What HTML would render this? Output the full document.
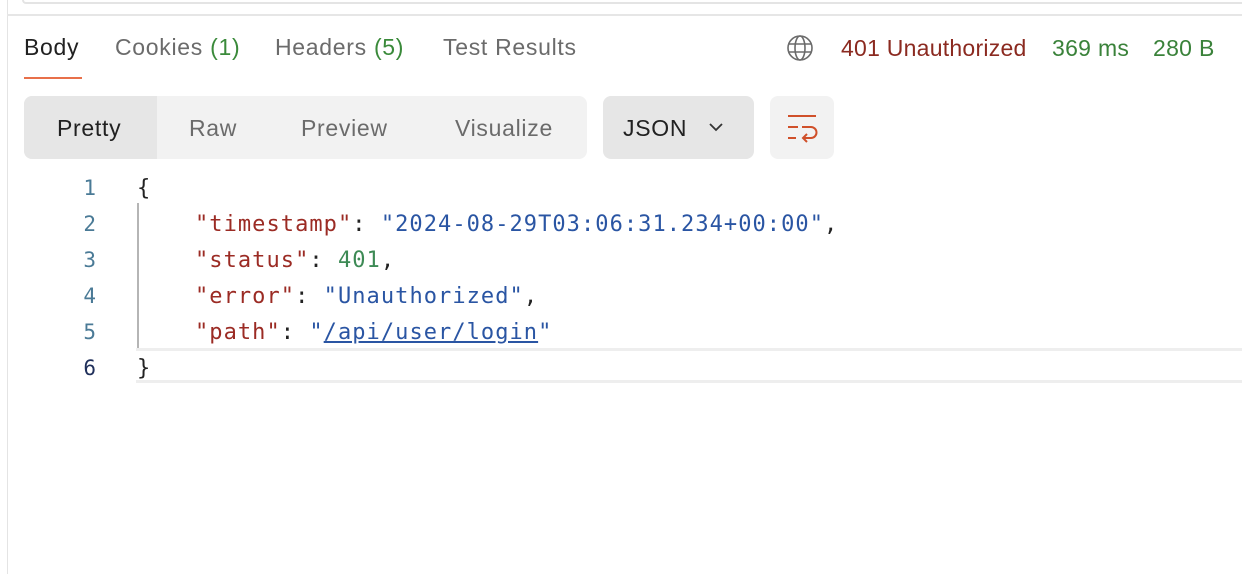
<!DOCTYPE html>
<html><head><meta charset="utf-8"><style>
*{margin:0;padding:0;box-sizing:border-box}
body{width:1242px;height:574px;background:#fff;position:relative;overflow:hidden;font-family:"Liberation Sans",sans-serif}
.a{position:absolute;white-space:nowrap}
.t{font-size:23px;letter-spacing:0.7px;top:34px;color:#6b6b6b}
.u{font-size:23px;letter-spacing:0.7px}
.mono{font-family:"DejaVu Sans Mono","Liberation Mono",monospace;font-size:22px;letter-spacing:1.05px}
.ln{position:absolute;left:40px;width:56px;text-align:right;color:#4a7a96;font-family:"DejaVu Sans Mono",monospace;font-size:21px}
.k{color:#9b2b24}.s{color:#2a55a3}.n{color:#3d8a55}.p{color:#222}
</style></head><body>
<div class="a" style="left:7px;top:0;width:1px;height:574px;background:#e4e4e4"></div>
<div class="a" style="left:22px;top:0;width:1220px;height:4px;border-bottom:2px solid #e4e4e4;border-left:2px solid #e4e4e4;border-bottom-left-radius:4px"></div>
<div class="a" style="left:7px;top:14px;width:1235px;height:2px;background:#e6e6e6"></div>

<div class="a t" style="left:24px;color:#212121">Body</div>
<div class="a" style="left:24px;top:77px;width:58px;height:2px;background:#e8704a"></div>
<div class="a t" style="left:115px">Cookies <span style="color:#3a8a3a">(1)</span></div>
<div class="a t" style="left:275px">Headers <span style="color:#3a8a3a">(5)</span></div>
<div class="a t" style="left:443px">Test Results</div>

<svg class="a" style="left:786px;top:34px" width="28" height="28" viewBox="0 0 28 28" fill="none" stroke="#6b6b6b" stroke-width="1.6"><circle cx="14" cy="14" r="12"/><ellipse cx="14" cy="14" rx="5" ry="12"/><path d="M3 10h22M3 18h22"/></svg>
<div class="a u" style="left:841px;top:35px;color:#8b2a20;letter-spacing:0.25px">401 Unauthorized</div>
<div class="a u" style="left:1052px;top:35px;color:#3a823a;letter-spacing:0.3px">369 ms</div>
<div class="a u" style="left:1153px;top:35px;color:#3a823a;letter-spacing:0.3px">280 B</div>

<div class="a" style="left:24px;top:96px;width:563px;height:63px;background:#f2f2f2;border-radius:8px"></div>
<div class="a" style="left:24px;top:96px;width:133px;height:63px;background:#e6e6e6;border-radius:8px 0 0 8px"></div>
<div class="a u" style="left:57px;top:115px;color:#212121">Pretty</div>
<div class="a u" style="left:189px;top:115px;color:#6b6b6b">Raw</div>
<div class="a u" style="left:301px;top:115px;color:#6b6b6b">Preview</div>
<div class="a u" style="left:455px;top:115px;color:#6b6b6b">Visualize</div>

<div class="a" style="left:603px;top:96px;width:151px;height:63px;background:#e6e6e6;border-radius:8px"></div>
<div class="a u" style="left:623px;top:115px;color:#212121">JSON</div>
<svg class="a" style="left:707px;top:120px" width="18" height="14" viewBox="0 0 18 14" fill="none" stroke="#333" stroke-width="1.8"><path d="M3 4l6 6 6-6"/></svg>
<div class="a" style="left:770px;top:96px;width:64px;height:63px;background:#f2f2f2;border-radius:8px"></div>
<svg class="a" style="left:786px;top:112px" width="32" height="32" viewBox="0 0 32 32" fill="none" stroke="#d0502a" stroke-width="2"><path d="M2 4h28M2 15h10M2 26h8"/><path d="M16 15h9a5.5 5.5 0 0 1 0 11H18"/><path d="M21 22l-4 4 4 4"/></svg>

<div class="a" style="left:137px;top:203px;width:2px;height:145px;background:#b5b5b5"></div>
<div class="a" style="left:136px;top:348px;width:1106px;height:35px;border-top:3px solid #eeeeee;border-bottom:3px solid #eeeeee"></div>

<div class="ln" style="top:176px">1</div>
<div class="ln" style="top:212px">2</div>
<div class="ln" style="top:248px">3</div>
<div class="ln" style="top:284px">4</div>
<div class="ln" style="top:320px">5</div>
<div class="ln" style="top:356px;color:#1f2f5a">6</div>

<div class="a mono p" style="left:137px;top:176px">{</div>
<div class="a mono" style="left:195px;top:212px"><span class="k">"timestamp"</span><span class="p">: </span><span class="s">"2024-08-29T03:06:31.234+00:00"</span><span class="p">,</span></div>
<div class="a mono" style="left:195px;top:248px"><span class="k">"status"</span><span class="p">: </span><span class="n">401</span><span class="p">,</span></div>
<div class="a mono" style="left:195px;top:284px"><span class="k">"error"</span><span class="p">: </span><span class="s">"Unauthorized"</span><span class="p">,</span></div>
<div class="a mono" style="left:195px;top:320px"><span class="k">"path"</span><span class="p">: </span><span class="s">"<span style="text-decoration:underline">/api/user/login</span>"</span></div>
<div class="a mono p" style="left:137px;top:356px">}</div>
</body></html>
